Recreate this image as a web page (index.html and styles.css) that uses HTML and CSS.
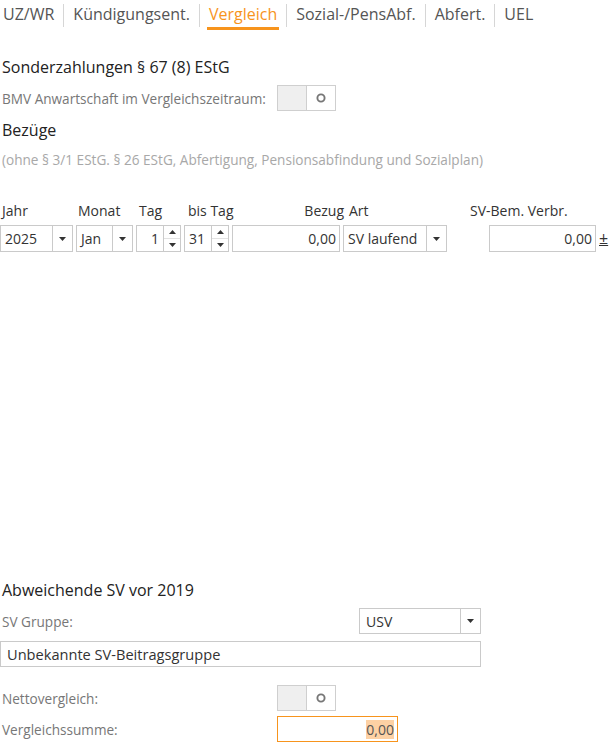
FILE: index.html
```html
<!DOCTYPE html>
<html lang="de">
<head>
    <meta charset="UTF-8">
    <meta name="viewport" content="width=device-width, initial-scale=1.0">
    <title>Vergleich</title>
    <link rel="stylesheet" href="styles.css">
</head>
<body>
    <!-- Tab bar -->
    <div class="tabs">
        <div class="tab"><span>UZ/WR</span></div>
        <div class="tab"><span>Kündigungsent.</span></div>
        <div class="tab active"><span>Vergleich</span></div>
        <div class="tab"><span>Sozial-/PensAbf.</span></div>
        <div class="tab"><span>Abfert.</span></div>
        <div class="tab"><span>UEL</span></div>
    </div>

    <div class="page">
        <h2 class="section-title first">Sonderzahlungen § 67 (8) EStG</h2>
        <div class="field-row">
            <span class="label">BMV Anwartschaft im Vergleichszeitraum:</span>
            <div class="toggle">
                <span class="toggle-off"></span>
                <span class="toggle-on"><svg width="10" height="10" viewBox="0 0 10 10"><circle cx="5" cy="5" r="3.6" fill="none" stroke="#777" stroke-width="1.9"/></svg></span>
            </div>
        </div>

        <h2 class="section-title sub">Bezüge</h2>
        <div class="note">(ohne § 3/1 EStG. § 26 EStG, Abfertigung, Pensionsabfindung und Sozialplan)</div>

        <div class="grid">
            <div class="col-head">Jahr</div>
            <div class="col-head">Monat</div>
            <div class="col-head head-tag">Tag</div>
            <div class="col-head head-bis">bis Tag</div>
            <div class="col-head head-bezug">Bezug</div>
            <div class="col-head head-art">Art</div>
            <div class="col-head head-sv">SV-Bem. Verbr.</div>

            <div class="combo">
                <span class="combo-text">2025</span>
                <span class="combo-btn"><svg width="7" height="4" viewBox="0 0 7 4"><polygon points="0,0 7,0 3.5,4" fill="#333"/></svg></span>
            </div>
            <div class="combo">
                <span class="combo-text">Jan</span>
                <span class="combo-btn"><svg width="7" height="4" viewBox="0 0 7 4"><polygon points="0,0 7,0 3.5,4" fill="#333"/></svg></span>
            </div>
            <div class="spin">
                <span class="spin-text right">1</span>
                <span class="spin-btns">
                    <span><svg width="7" height="4" viewBox="0 0 7 4"><polygon points="0,4 7,4 3.5,0" fill="#333"/></svg></span>
                    <span><svg width="7" height="4" viewBox="0 0 7 4"><polygon points="0,0 7,0 3.5,4" fill="#333"/></svg></span>
                </span>
            </div>
            <div class="spin">
                <span class="spin-text">31</span>
                <span class="spin-btns">
                    <span><svg width="7" height="4" viewBox="0 0 7 4"><polygon points="0,4 7,4 3.5,0" fill="#333"/></svg></span>
                    <span><svg width="7" height="4" viewBox="0 0 7 4"><polygon points="0,0 7,0 3.5,4" fill="#333"/></svg></span>
                </span>
            </div>
            <div class="input num">0,00</div>
            <div class="combo">
                <span class="combo-text">SV laufend</span>
                <span class="combo-btn"><svg width="7" height="4" viewBox="0 0 7 4"><polygon points="0,0 7,0 3.5,4" fill="#333"/></svg></span>
            </div>
            <div class="input num col-sv">0,00</div>
            <div class="plusminus">±</div>
        </div>

        <!-- lower block -->
        <h2 class="section-title lower">Abweichende SV vor 2019</h2>
        <div class="group-row">
            <span class="label">SV Gruppe:</span>
            <div class="combo combo-usv">
                <span class="combo-text">USV</span>
                <span class="combo-btn"><svg width="7" height="4" viewBox="0 0 7 4"><polygon points="0,0 7,0 3.5,4" fill="#333"/></svg></span>
            </div>
        </div>
        <div class="input wide">Unbekannte SV-Beitragsgruppe</div>

        <div class="form-row netto">
            <span class="label form-label">Nettovergleich:</span>
            <div class="toggle">
                <span class="toggle-off"></span>
                <span class="toggle-on"><svg width="10" height="10" viewBox="0 0 10 10"><circle cx="5" cy="5" r="3.6" fill="none" stroke="#777" stroke-width="1.9"/></svg></span>
            </div>
        </div>
        <div class="form-row summe">
            <span class="label form-label">Vergleichssumme:</span>
            <div class="input num focus"><span class="selected">0,00</span></div>
        </div>
    </div>
</body>
</html>
```

FILE: styles.css
```css
body {
    margin: 0;
    padding: 0;
    background-color: #fff;
    font-family: "Open Sans", "Noto Sans", sans-serif;
    color: #333;
}
.tabs {
    display: flex;
    padding: 4px 0 0 3px;
    height: 27px;
}
.tab {
    height: 23px;
    padding: 0 9px;
    border-left: 1px solid #d6d6d6;
    font-size: 16px;
    line-height: 21px;
    color: #555;
}
.tab:first-child {
    border-left: none;
    padding-left: 0;
}
.tab span {
    display: inline-block;
}
.tab.active span {
    color: #f7941d;
    border-bottom: 3px solid #f7941d;
    padding: 0 2px 2px;
    margin: 0 -2px;
}
.page {
    padding-left: 2px;
}
.section-title {
    margin: 0;
    font-size: 16px;
    font-weight: normal;
    line-height: 20px;
    color: #222;
}
.section-title.first {
    margin-top: 26px;
}
.section-title.sub {
    margin-top: 9px;
}
.section-title.lower {
    margin-top: 328px;
}
.label {
    font-size: 13.6px;
    color: #777;
}
.field-row {
    display: flex;
    align-items: center;
    height: 26px;
    margin-top: 8px;
}
.field-row .label {
    width: 275px;
}
.toggle {
    display: flex;
    width: 59px;
    height: 26px;
    box-sizing: border-box;
    border: 1px solid #cfcfcf;
}
.toggle-off {
    width: 28px;
    background-color: #efefef;
    border-right: 1px solid #cfcfcf;
}
.toggle-on {
    flex: 1;
    display: flex;
    align-items: center;
    justify-content: center;
}
.note {
    margin-top: 11px;
    font-size: 13.6px;
    line-height: 18px;
    color: #a8a8a8;
}
.grid {
    display: grid;
    grid-template-columns: 73px 57px 45px 45px 108px 104px 36px 107px auto;
    grid-template-rows: 18px 27px;
    column-gap: 3px;
    row-gap: 5px;
    margin-top: 33px;
    margin-left: -2px;
}
.col-head {
    font-size: 14px;
    line-height: 18px;
    color: #333;
    padding-left: 2px;
    white-space: nowrap;
}
.head-tag {
    padding-left: 3px;
}
.head-bis {
    padding-left: 4px;
}
.head-bezug {
    text-align: right;
    margin-right: -4px;
}
.head-art {
    padding-left: 6px;
}
.head-sv {
    grid-column: 7 / -1;
    padding-left: 20px;
}
.combo, .spin, .input {
    display: flex;
    box-sizing: border-box;
    border: 1px solid #cacaca;
    font-size: 14px;
    color: #333;
    align-items: center;
    height: 27px;
}
.combo-text {
    flex: 1;
    padding-left: 4px;
    white-space: nowrap;
}
.combo-btn {
    width: 19px;
    align-self: stretch;
    border-left: 1px solid #cacaca;
    display: flex;
    align-items: center;
    justify-content: center;
}
.spin-text {
    flex: 1;
    padding-left: 4px;
}
.spin-text.right {
    text-align: right;
    padding: 0 4px 0 0;
}
.spin-btns {
    width: 16px;
    align-self: stretch;
    border-left: 1px solid #cacaca;
    display: flex;
    flex-direction: column;
}
.spin-btns span {
    flex: 1;
    display: flex;
    align-items: center;
    justify-content: center;
}
.spin-btns span:first-child {
    border-bottom: 1px solid #e2e2e2;
}
.input {
    padding: 0 6px;
}
.input.num {
    justify-content: flex-end;
    padding: 0 3px 0 0;
}
.col-sv {
    grid-column: 8;
}
.plusminus {
    font-size: 16px;
    line-height: 27px;
    color: #333;
    text-decoration: underline;
}
.group-row {
    display: flex;
    justify-content: space-between;
    align-items: center;
    width: 479px;
    margin-top: 8px;
}
.combo-usv {
    width: 122px;
    height: 26px;
}
.combo-usv .combo-text {
    padding-left: 6px;
}
.input.wide {
    width: 481px;
    height: 26px;
    margin: 7px 0 0 -2px;
    padding-left: 6px;
    font-size: 14.6px;
}
.form-row {
    display: flex;
    align-items: center;
}
.form-label {
    width: 275px;
}
.form-row.netto {
    margin-top: 18px;
}
.form-row.summe {
    margin-top: 5px;
}
.input.focus {
    width: 121px;
    height: 26px;
    border-color: #f7941d;
    color: #555;
}
.selected {
    background-color: #fdd1a4;
}
```
